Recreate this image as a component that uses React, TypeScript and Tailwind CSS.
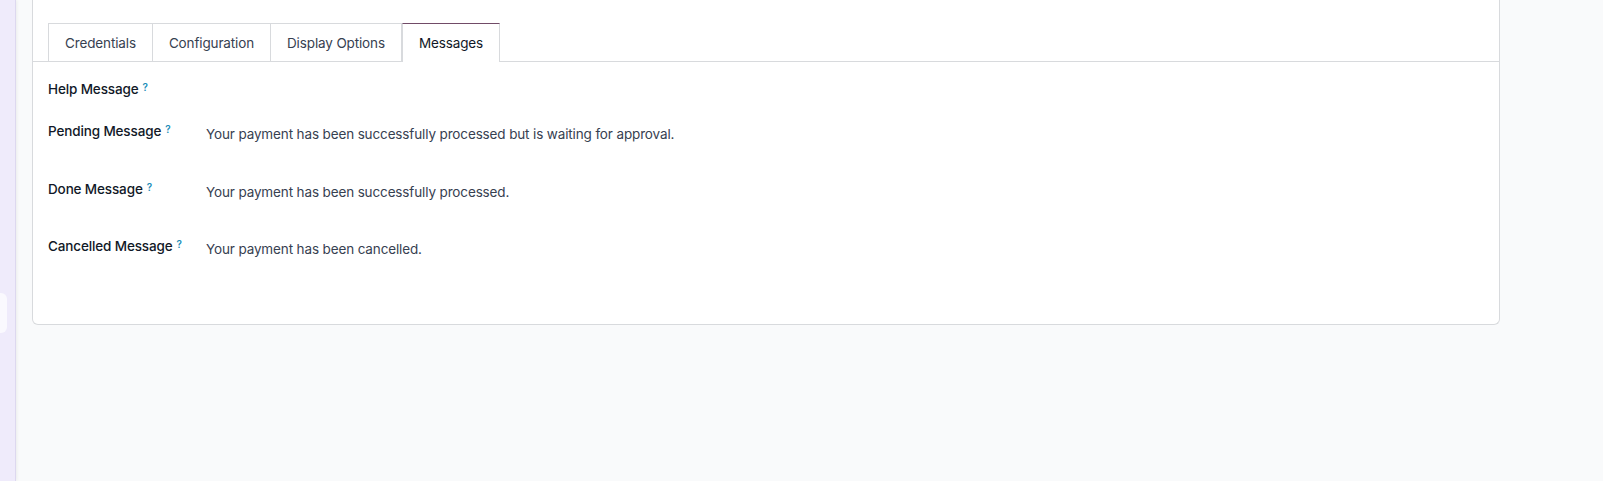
import React from "react";

const tabs = ["Credentials", "Configuration", "Display Options", "Messages"];

const rows = [
  { label: "Help Message", value: "", h: "h-[42px]" },
  {
    label: "Pending Message",
    value: "Your payment has been successfully processed but is waiting for approval.",
    h: "h-[58px]",
  },
  { label: "Done Message", value: "Your payment has been successfully processed.", h: "h-[57px]" },
  { label: "Cancelled Message", value: "Your payment has been cancelled.", h: "h-[57px]" },
];

function Label({ text }: { text: string }) {
  return (
    <div className="w-[158px] shrink-0 text-[13.5px] leading-5 font-medium tracking-[-0.01em] text-[#111827]">
      {text}
      <sup className="ml-[4px] relative -top-[3px] text-[10px] font-semibold text-[#1a8db8]">?</sup>
    </div>
  );
}

export default function App() {
  return (
    <div
      className="flex h-[481px] w-full bg-[#f9fafb] text-[#374151]"
      style={{ fontFamily: "Inter, 'Noto Sans', sans-serif" }}
    >
      {/* sidebar edge */}
      <div className="relative h-full w-[16px] shrink-0 bg-[#efebfb] border-r border-[#ddd8ef] shadow-[1px_0_3px_rgba(0,0,0,0.06)]">
        <div className="absolute left-0 top-[293px] h-[40px] w-[7px] rounded-r-md bg-[#faf9fe]" />
      </div>

      <div className="flex-1 pl-[16px] pr-[103px]">
        <div className="h-[325px] rounded-b-md border-x border-b border-[#d8dadd] bg-white">
          <div className="flex border-b border-[#d8dadd] pl-[15px] pt-[23px]">
            {tabs.map((t, i) => {
              const active = t === "Messages";
              return (
                <div
                  key={t}
                  className={
                    active
                      ? "-mb-px h-[39px] border-x border-t border-[#d8dadd] border-t-[#714b67] bg-white px-[16px] text-[13.5px] tracking-[-0.01em] leading-[38px] text-[#111827]"
                      : `h-[38px] border-t border-[#d8dadd] ${i === 0 ? "border-l" : ""} border-r px-[16px] text-[13.5px] tracking-[-0.01em] leading-[38px] text-[#374151]`
                  }
                >
                  {t}
                </div>
              );
            })}
          </div>

          <div className="px-[15px] pt-[17px]">
            {rows.map((r) => (
              <div key={r.label} className={`flex ${r.h}`}>
                <Label text={r.label} />
                <div className="pt-[3px] text-[13.5px] leading-5 tracking-[-0.01em] text-[#374151]">{r.value}</div>
              </div>
            ))}
          </div>
        </div>
      </div>
    </div>
  );
}
